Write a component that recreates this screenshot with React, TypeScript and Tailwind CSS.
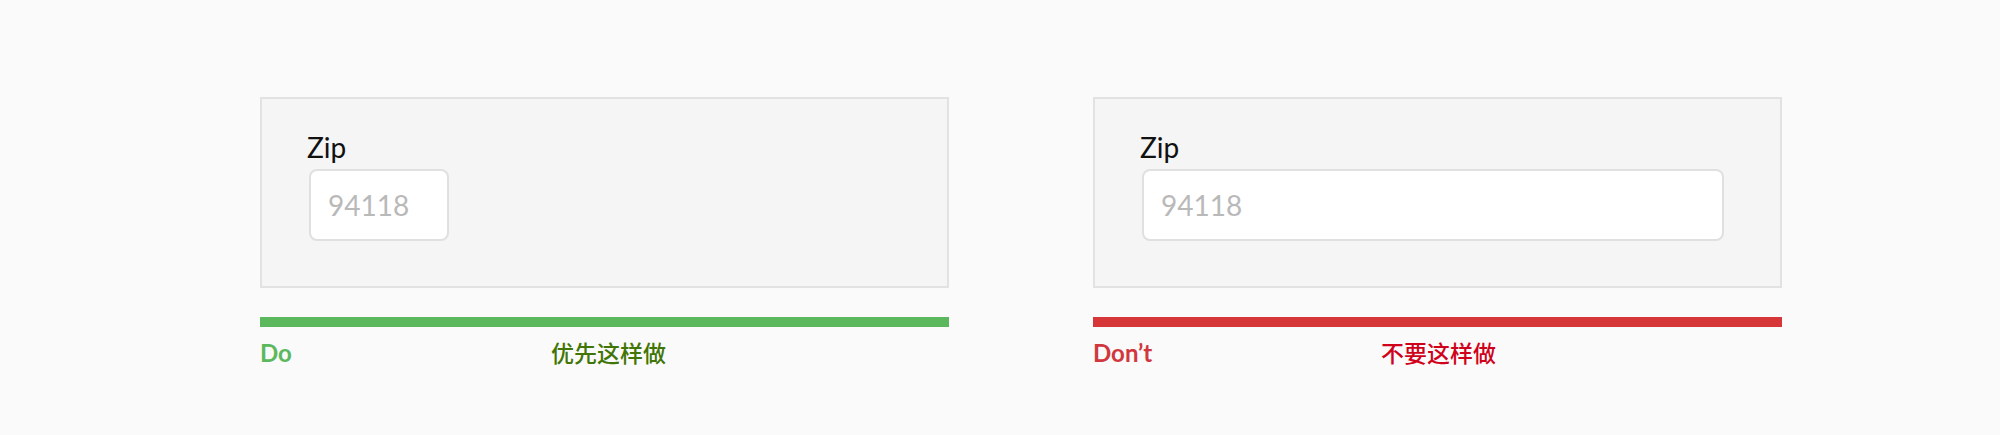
const fontStack = "font-['Lato','Noto_Sans_CJK_SC',sans-serif]";

type ExampleProps = {
  wide: boolean;
  barColor: string;
  label: string;
  labelColor: string;
  note: string;
  noteColor: string;
  noteOffset: string;
};

const Example = ({ wide, barColor, label, labelColor, note, noteColor, noteOffset }: ExampleProps) => {
  return (
    <div className="flex flex-col w-[689px]">
      <div className="h-[191px] border-2 border-[#e2e2e2] bg-[#f5f5f5] pl-[47px] pr-[56px] pt-[31px]">
        <div className="-ml-[2px] text-[28px] leading-[34px] text-[#111]">Zip</div>
        <input
          type="text"
          placeholder="94118"
          className={`mt-[5px] h-[72px] ${
            wide ? "w-full" : "w-[140px]"
          } rounded-[8px] border-2 border-[#e0e0e0] bg-white px-[17px] text-[28px] text-[#111] placeholder:text-[#b9b9b9] outline-none`}
        />
      </div>

      <div className={`mt-[29px] h-[10px] ${barColor}`} />

      <div className="mt-[11px] flex items-start">
        <span className={`${noteOffset} shrink-0 text-[24px] leading-[30px] font-bold ${labelColor}`}>
          {label}
        </span>
        <span className={`text-[23px] leading-[30px] font-medium ${noteColor}`}>{note}</span>
      </div>
    </div>
  );
};

const App = () => {
  return (
    <div className={`w-[2000px] h-[435px] bg-[#fafafa] ${fontStack}`}>
      <div className="flex gap-[144px] pl-[260px] pt-[97px]">
        <Example
          wide={false}
          barColor="bg-[#5cb85c]"
          label="Do"
          labelColor="text-[#5cb85c]"
          note="优先这样做"
          noteColor="text-[#417505]"
          noteOffset="w-[291px]"
        />
        <Example
          wide={true}
          barColor="bg-[#d63638]"
          label="Don’t"
          labelColor="text-[#d0383e]"
          note="不要这样做"
          noteColor="text-[#d0021b]"
          noteOffset="w-[288px]"
        />
      </div>
    </div>
  );
};

export default App;
